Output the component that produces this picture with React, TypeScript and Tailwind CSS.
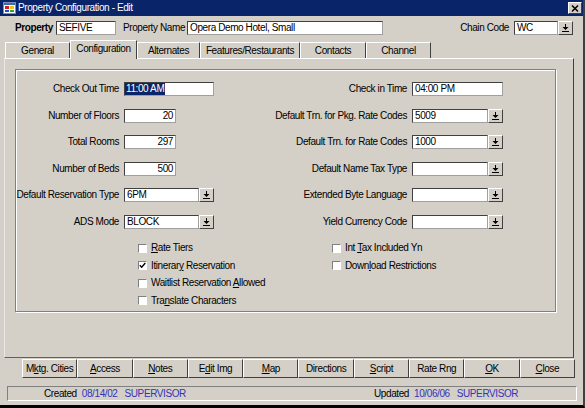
import React from 'react';

const base = "font-['Liberation_Sans',Arial,sans-serif] text-[10px] leading-none tracking-[-0.4px] text-black";
const sunken = 'border border-t-[#404040] border-l-[#404040] border-r-[#a0a0a0] border-b-[#a0a0a0] bg-white';
const raised = 'border border-t-white border-l-white border-r-[#404040] border-b-[#404040] bg-[#d4d0c8]';

const DropButton = () => (
  <div className={`flex h-[14px] w-[15px] shrink-0 items-center justify-center ${raised}`}>
    <svg width="7" height="8" viewBox="0 0 7 8">
      <path d="M3 0h1v3h2.5L3.5 6 0.5 3H3z" fill="#000" />
      <rect x="0" y="7" width="7" height="1" fill="#000" />
    </svg>
  </div>
);

const TextBox = ({ className, value, right }: { className: string; value?: string; right?: boolean }) => (
  <div className={`flex h-[14px] items-center px-[2px] ${sunken} ${right ? 'justify-end' : ''} ${className}`}>
    {value}
  </div>
);

const Combo = ({ className, value }: { className: string; value?: string }) => (
  <div className="flex items-center">
    <TextBox className={className} value={value} />
    <DropButton />
  </div>
);

const Check = ({ checked, children }: { checked?: boolean; children: React.ReactNode }) => (
  <div className="flex h-[17.5px] items-center gap-[4px]">
    <div className="flex h-[9px] w-[9px] items-center justify-center border border-t-[#808080] border-l-[#808080] border-r-white border-b-white bg-white">
      {checked && (
        <svg width="7" height="7" viewBox="0 0 7 7">
          <path d="M0.8 3.2 L2.7 5.2 L6.3 1" stroke="#000" strokeWidth="1.4" fill="none" />
        </svg>
      )}
    </div>
    <span>{children}</span>
  </div>
);

const tabs = [
  { name: 'General', w: 'w-[65px]' },
  { name: 'Configuration', w: 'w-[67px]', active: true },
  { name: 'Alternates', w: 'w-[63px]' },
  { name: 'Features/Restaurants', w: 'w-[100px]' },
  { name: 'Contacts', w: 'w-[66px]' },
  { name: 'Channel', w: 'w-[65px]' },
];

const buttons: React.ReactNode[] = [
  <>M<u>k</u>tg. Cities</>,
  <><u>A</u>ccess</>,
  <><u>N</u>otes</>,
  <>E<u>d</u>it Img</>,
  <><u>M</u>ap</>,
  <>Directions</>,
  <><u>S</u>cript</>,
  <>Rate Rng</>,
  <><u>O</u>K</>,
  <><u>C</u>lose</>,
];

const AppIcon = () => (
  <svg width="13" height="12" viewBox="0 0 13 12">
    <rect x="0.5" y="0.5" width="12" height="11" fill="#ffffff" stroke="#7a8fb8" />
    <rect x="1" y="1" width="11" height="2" fill="#3a6ea5" />
    <rect x="2" y="4" width="4" height="3" fill="#d02020" />
    <rect x="7" y="4" width="4" height="3" fill="#f0c020" />
    <rect x="2" y="8" width="4" height="2" fill="#2050c0" />
    <rect x="7" y="8" width="4" height="2" fill="#30a030" />
  </svg>
);

export default function App() {
  return (
    <div className={`${base} flex h-[408px] w-[585px] flex-col overflow-hidden border-r-2 border-b-[3px] border-r-[#404040] border-b-black bg-[#d4d0c8]`}>
      {/* title bar */}
      <div className="flex h-[16px] shrink-0 items-center bg-[#0a246a] pl-[3px] pr-[1px]">
        <AppIcon />
        <span className="ml-[2px] text-white">Property Configuration - Edit</span>
        <div className={`ml-auto flex h-[12px] w-[14px] items-center justify-center ${raised}`}>
          <svg width="8" height="7" viewBox="0 0 8 7">
            <path d="M1 0.5 L7 6.5 M7 0.5 L1 6.5" stroke="#000" strokeWidth="1.5" />
          </svg>
        </div>
      </div>

      {/* property row */}
      <div className="mt-[5px] flex h-[14px] shrink-0 items-center pl-[15px] pr-[10px]">
        <span className="w-[41px] font-bold">Property</span>
        <TextBox className="w-[60px]" value="SEFIVE" />
        <span className="w-[71px] pl-[7px]">Property Name</span>
        <TextBox className="w-[196px]" value="Opera Demo Hotel, Small" />
        <span className="ml-auto mr-[5px]">Chain Code</span>
        <TextBox className="w-[44px]" value="WC" />
        <DropButton />
      </div>

      {/* tabs + panel */}
      <div className="ml-[4px] mt-[5px] w-[570px] shrink-0">
        <div className="flex h-[18px] items-end pl-px">
          {tabs.map(t =>
            t.active ? (
              <div
                key={t.name}
                className={`relative z-10 -mb-px flex h-[19px] items-center justify-center border-t border-l border-r border-t-white border-l-white border-r-[#404040] bg-[#d4d0c8] pb-[2px] ${t.w}`}
              >
                {t.name}
              </div>
            ) : (
              <div
                key={t.name}
                className={`flex h-[16px] items-center justify-center border-t border-l border-r border-t-white border-l-white border-r-[#404040] ${t.w}`}
              >
                {t.name}
              </div>
            )
          )}
        </div>
        <div className="h-[300px] border border-t-white border-l-[#e8e8e8] border-r-[#404040] border-b-[#606060] pl-[10px] pr-[17px] pt-[10px]">
          <div className="h-[243px] border border-[#808080] pt-[12px] shadow-[inset_1px_1px_0_#ffffff,1px_1px_0_#ffffff]">
            <div className="flex">
              {/* left column */}
              <div className="flex w-[214px] flex-col gap-[12.5px]">
                <div className="flex h-[14px] items-center gap-[5px]">
                  <span className="w-[103px] text-right">Check Out Time</span>
                  <div className={`flex h-[14px] w-[90px] items-stretch ${sunken}`}>
                    <span className="flex items-center bg-[#0a246a] px-px text-white">11:00 AM</span>
                  </div>
                </div>
                <div className="flex h-[14px] items-center gap-[5px]">
                  <span className="w-[103px] text-right">Number of Floors</span>
                  <TextBox className="w-[52px]" value="20" right />
                </div>
                <div className="flex h-[14px] items-center gap-[5px]">
                  <span className="w-[103px] text-right">Total Rooms</span>
                  <TextBox className="w-[52px]" value="297" right />
                </div>
                <div className="flex h-[14px] items-center gap-[5px]">
                  <span className="w-[103px] text-right">Number of Beds</span>
                  <TextBox className="w-[52px]" value="500" right />
                </div>
                <div className="flex h-[14px] items-center gap-[5px]">
                  <span className="w-[103px] text-right whitespace-nowrap">Default Reservation Type</span>
                  <Combo className="w-[75px]" value="6PM" />
                </div>
                <div className="flex h-[14px] items-center gap-[5px]">
                  <span className="w-[103px] text-right">ADS Mode</span>
                  <Combo className="w-[75px]" value="BLOCK" />
                </div>
              </div>

              {/* right column */}
              <div className="flex flex-col gap-[12.5px]">
                <div className="flex h-[14px] items-center gap-[5px]">
                  <span className="w-[177px] text-right">Check in Time</span>
                  <TextBox className="w-[91px]" value="04:00 PM" />
                </div>
                <div className="flex h-[14px] items-center gap-[5px]">
                  <span className="w-[177px] text-right whitespace-nowrap">Default Trn. for Pkg. Rate Codes</span>
                  <Combo className="w-[76px]" value="5009" />
                </div>
                <div className="flex h-[14px] items-center gap-[5px]">
                  <span className="w-[177px] text-right whitespace-nowrap">Default Trn. for Rate Codes</span>
                  <Combo className="w-[76px]" value="1000" />
                </div>
                <div className="flex h-[14px] items-center gap-[5px]">
                  <span className="w-[177px] text-right">Default Name Tax Type</span>
                  <Combo className="w-[76px]" />
                </div>
                <div className="flex h-[14px] items-center gap-[5px]">
                  <span className="w-[177px] text-right">Extended Byte Language</span>
                  <Combo className="w-[76px]" />
                </div>
                <div className="flex h-[14px] items-center gap-[5px]">
                  <span className="w-[177px] text-right">Yield Currency Code</span>
                  <Combo className="w-[76px]" />
                </div>
              </div>
            </div>

            {/* checkboxes */}
            <div className="mt-[11px] flex pl-[122px]">
              <div className="flex w-[194px] flex-col">
                <Check><u>R</u>ate Tiers</Check>
                <Check checked>Itinerar<u>y</u> Reservation</Check>
                <Check>Waitlist Reservation <u>A</u>llowed</Check>
                <Check>Tra<u>n</u>slate Characters</Check>
              </div>
              <div className="flex flex-col">
                <Check>Int <u>T</u>ax Included Yn</Check>
                <Check>Down<u>l</u>oad Restrictions</Check>
              </div>
            </div>
          </div>
        </div>
      </div>

      {/* button bar */}
      <div className="ml-[22px] mt-px grid h-[19px] w-[553px] shrink-0 grid-cols-10">
        {buttons.map((b, i) => (
          <div key={i} className={`flex items-center justify-center ${raised}`}>
            {b}
          </div>
        ))}
      </div>

      {/* status bar */}
      <div className="ml-[7px] mt-[8px] flex h-[15px] w-[570px] shrink-0 items-center border border-t-[#808080] border-l-[#808080] border-r-white border-b-white">
        <div className="flex w-[366px] gap-[5px] pl-[36px]">
          <span>Created</span>
          <span className="text-[#3333bb]">08/14/02</span>
          <span className="ml-[2px] text-[#3333bb]">SUPERVISOR</span>
        </div>
        <div className="flex gap-[5px]">
          <span>Updated</span>
          <span className="text-[#3333bb]">10/06/06</span>
          <span className="ml-[2px] text-[#3333bb]">SUPERVISOR</span>
        </div>
      </div>
    </div>
  );
}
